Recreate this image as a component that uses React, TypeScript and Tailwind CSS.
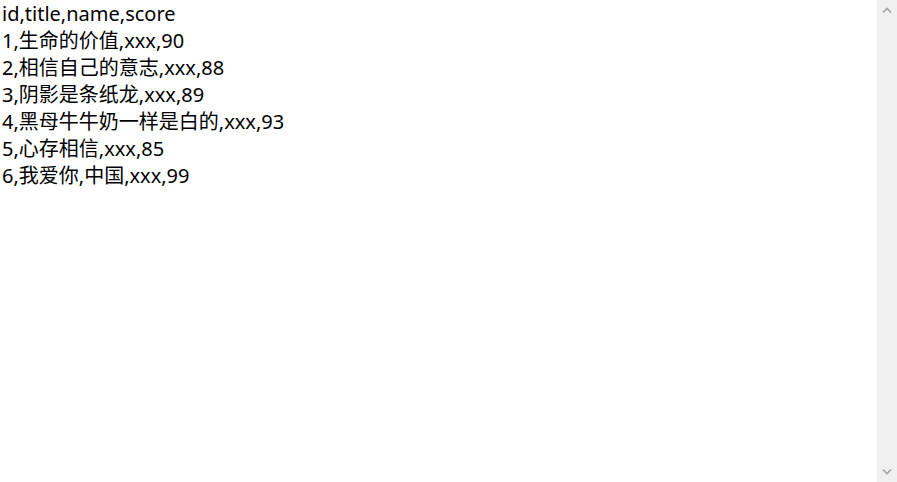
import React from "react";

const lines = [
  "id,title,name,score",
  "1,生命的价值,xxx,90",
  "2,相信自己的意志,xxx,88",
  "3,阴影是条纸龙,xxx,89",
  "4,黑母牛牛奶一样是白的,xxx,93",
  "5,心存相信,xxx,85",
  "6,我爱你,中国,xxx,99",
];

export default function App() {
  return (
    <div className="flex h-[482px] w-[897px] bg-white overflow-hidden">
      <div
        className="flex-1 pl-[2px] text-[20px] leading-[27px] text-black"
        style={{ fontFamily: '"Noto Sans", "Noto Sans CJK SC", sans-serif' }}
      >
        {lines.map((l, i) => (
          <div key={i} className="whitespace-pre">{l}</div>
        ))}
      </div>
      <div className="flex w-[20px] flex-col justify-between bg-[#f0f0f0]">
        <div className="flex h-[20px] items-center justify-center">
          <svg width="10" height="6" viewBox="0 0 10 6">
            <path d="M1 5.5 L5 1.5 L9 5.5" stroke="#a3a3a3" strokeWidth="1.6" fill="none" />
          </svg>
        </div>
        <div className="flex h-[20px] items-center justify-center">
          <svg width="10" height="6" viewBox="0 0 10 6">
            <path d="M1 0.5 L5 4.5 L9 0.5" stroke="#a3a3a3" strokeWidth="1.6" fill="none" />
          </svg>
        </div>
      </div>
    </div>
  );
}
